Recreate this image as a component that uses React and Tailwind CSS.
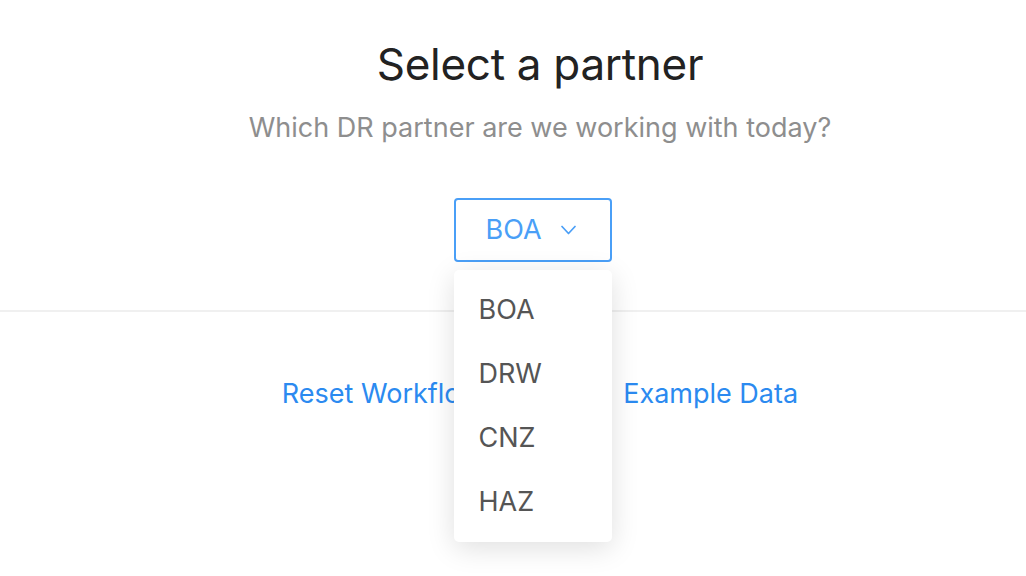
import { useState } from "react";

const partners = ["BOA", "DRW", "CNZ", "HAZ"];

const App = () => {
  const [partner, setPartner] = useState("BOA");

  return (
    <div
      className="min-h-[576px] bg-white"
      style={{ fontFamily: "Inter, 'Noto Sans', sans-serif" }}
    >
      {/* Heading */}
      <div className="pl-[54px] pt-[37px] text-center">
        <h1 className="text-[44px] leading-[54px] text-[#222222] tracking-[-0.3px]">
          Select a partner
        </h1>
        <p className="mt-[20px] text-[27px] leading-[34px] text-[#8e8e8e]">
          Which DR partner are we working with today?
        </p>
      </div>

      {/* Partner select */}
      <div className="flex justify-center pl-[54px] pt-[53px] pb-[48px]">
        <div className="relative mr-[15px]">
          <button className="flex h-[64px] w-[158px] items-center gap-[19px] rounded-[4px] border-2 border-[#4a9ff7] pl-[30px] text-[27px] text-[#4a9ff7]">
            <span>{partner}</span>
            <svg
              width="15"
              height="10"
              viewBox="0 0 15 10"
              fill="none"
              stroke="currentColor"
              strokeWidth="1.7"
              strokeLinecap="round"
              strokeLinejoin="round"
            >
              <path d="M1 1.5l6.5 7L14 1.5" />
            </svg>
          </button>

          {/* Menu */}
          <ul className="absolute left-0 top-[72px] z-10 w-[158px] rounded-[5px] bg-white py-[8px] shadow-[0_6px_28px_rgba(0,0,0,0.13)]">
            {partners.map((p) => (
              <li
                key={p}
                onClick={() => setPartner(p)}
                className="flex h-[64px] cursor-pointer items-center pl-[25px] text-[27px] text-[#555555]"
              >
                {p}
              </li>
            ))}
          </ul>
        </div>
      </div>

      <div className="h-[2px] bg-[#f0f0f0]" />

      {/* Actions */}
      <div className="flex justify-center gap-[62px] pl-[54px] pt-[62px] text-[27px] text-[#2b8af0]">
        <a href="#">Reset Workflow</a>
        <a href="#">
          <span className="mr-[8px]">Load</span> Example Data
        </a>
      </div>
    </div>
  );
};

export default App;
